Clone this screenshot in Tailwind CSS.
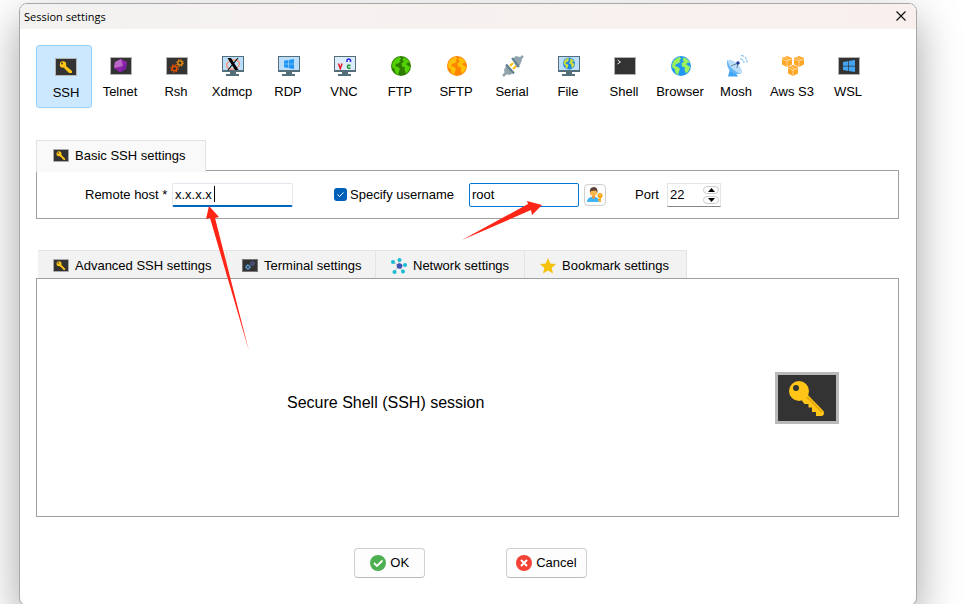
<!DOCTYPE html>
<html lang="en">
<head>
    <meta charset="UTF-8">
    <meta name="viewport" content="width=device-width, initial-scale=1.0">
    <title>Session settings</title>
    <script src="https://cdn.jsdelivr.net/npm/@tailwindcss/browser@4"></script>
</head>
<body class="min-h-screen overflow-hidden bg-white pt-[3px] pr-[50px] pl-[19px] font-['Liberation_Sans',Arial,sans-serif] text-[13px] leading-5 text-black">
    <!-- Shared icon shapes -->
    <svg class="hidden" aria-hidden="true">
        <symbol id="screen" viewBox="0 0 22 18">
            <rect x=".5" y=".5" width="21" height="17" fill="#333" stroke="#b4b4b4"/>
        </symbol>
        <symbol id="key" viewBox="0 0 64 52">
            <rect x="1.5" y="1.5" width="61" height="49" fill="#333" stroke="#b9b9b9" stroke-width="3"/>
            <path d="M32 22 48.500 39q1.500 4-1.500 5h-6v-4h-4v-4.500h-3.500V32h-4l-3-4z" fill="#ffc517"/>
            <path d="m32 25 15 15" stroke="#e5a90d" stroke-width="2" fill="none"/>
            <circle cx="24" cy="19" r="10" fill="#ffc517"/>
            <circle cx="21" cy="16" r="3" fill="#333"/>
        </symbol>
        <symbol id="gear" viewBox="0 0 10 10">
            <circle cx="5" cy="5" r="2.6" fill="none" stroke="currentColor" stroke-width="1.6"/>
            <circle cx="5" cy="5" r="4" fill="none" stroke="currentColor" stroke-width="1.5" stroke-dasharray="1.6 1.54"/>
        </symbol>
        <symbol id="monitor" viewBox="0 0 22 20">
            <path d="M0 0h22v16H0z" fill="#546e7a"/>
            <path d="M1 1h20v13H1z" fill="#bbdefb"/>
            <path d="M8 16h6v2h3v2H4v-2h4z" fill="#546e7a"/>
        </symbol>
        <symbol id="windows" viewBox="0 0 12 12">
            <path d="M0 2 5 1.200v4.500H0zM5.700 1.100 12 0v5.700H5.700zM0 6.400h5v4.500L0 10zM5.700 6.400H12V12l-6.300-1z" fill="currentColor"/>
        </symbol>
        <symbol id="land" viewBox="0 0 20 20">
            <path d="M1.500 7C3 3.500 5.500 1.500 8.500 1l2 1.500-2 1.500 1 1.500-2.500 2-2 .5L4 10l3 1 2 2-1 2.500L7 19C5 18 3.500 16 4 13.500L1 11zM12.500 1.500C15.500 2 18 4.500 19 7l-2-.5-2 1.500 2.500 2 1.500.5c0 3-2 5.500-4 7l-1.500-3.500.5-2.500-3-1-.5-3 2.500-2-1.500-1.500z" fill="currentColor"/>
        </symbol>
        <symbol id="cube" viewBox="0 0 12 12">
            <path d="m6 0 5 2v6.500L6 11 1 8.500V2z" fill="#ffa726"/>
            <path d="m1 3 5 2 5-2M6 5v6M3.500 1.500 8 3.500" fill="none" stroke="#ffe0b2" stroke-width=".8"/>
        </symbol>
    </svg>

    <main class="relative min-h-[603px] rounded-[8px] border border-[#a8a8a8] bg-white shadow-[0_16px_44px_rgba(0,0,0,0.36)]">
        <header class="flex h-[25px] items-center justify-between rounded-t-[7px] bg-linear-to-r from-[#f3f2f1] to-[#f9f0ee] pr-[10px] pl-1">
            <h1 class="font-['Open_Sans','Noto_Sans',sans-serif] text-[11px]">Session settings</h1>
            <button type="button" aria-label="Close" class="pb-[2px]">
                <svg class="size-[10px]" viewBox="0 0 10 10"><path d="m.5.5 9 9m0-9-9 9" fill="none" stroke="#111" stroke-width="1.2"/></svg>
            </button>
        </header>

        <div class="pr-[17px] pl-4">
            <nav class="mt-4 flex *:flex *:h-[63px] *:w-[56px] *:flex-col *:items-center *:gap-[6px] *:pt-[11px] *:whitespace-nowrap">
                <button type="button" class="rounded-[3px] border border-[#99d1ff] bg-[#cce8ff] pl-1">
                    <svg class="h-5 w-[22px] shrink-0" viewBox="0 0 22 20"><use href="#screen" y="1" width="22" height="18"/><path d="m10.500 8.500 6.500 5.500v2h-3L9 11z" fill="#ffc517"/><circle cx="8" cy="7.500" r="3.200" fill="#ffc517"/><circle cx="7" cy="6.500" r=".9" fill="#333"/></svg>
                    SSH
                </button>
                <button type="button">
                    <svg class="ml-0.5 h-5 w-[22px] shrink-0" viewBox="0 0 22 20"><use href="#screen" y="1" width="22" height="18"/><path d="m11 3 6 3-1 7-6 3.500L4 12l1-6z" fill="#8e24aa"/><path d="m11 3 2 7-9 2 1-6z" fill="#ba68c8"/><path d="m13 10 4-4-1 7-6 3.500z" fill="#7b1fa2"/></svg>
                    Telnet
                </button>
                <button type="button">
                    <svg class="ml-0.5 h-5 w-[22px] shrink-0" viewBox="0 0 22 20"><use href="#screen" y="1" width="22" height="18"/><use href="#gear" x="4" y="8" width="9" height="9" class="text-[#e65100]"/><use href="#gear" x="10" y="3" width="8" height="8" class="text-[#ef8e0c]"/></svg>
                    Rsh
                </button>
                <button type="button">
                    <svg class="ml-0.5 h-5 w-[22px] shrink-0" viewBox="0 0 22 20"><use href="#monitor" width="22" height="20"/><ellipse cx="11" cy="8.500" rx="6.500" ry="4.500" fill="none" stroke="#ff8a65" stroke-width="1.300" transform="rotate(-12 11 8.500)"/><path d="M5.500 2H9l7.500 12H13z" fill="#000"/><path d="M16 2 6 14" stroke="#000" stroke-width="1.100"/></svg>
                    Xdmcp
                </button>
                <button type="button">
                    <svg class="ml-0.5 h-5 w-[22px] shrink-0" viewBox="0 0 22 20"><use href="#monitor" width="22" height="20"/><use href="#windows" x="6" y="3" width="10" height="10" class="text-[#2196f3]"/></svg>
                    RDP
                </button>
                <button type="button">
                    <svg class="ml-0.5 h-5 w-[22px] shrink-0" viewBox="0 0 22 20"><use href="#monitor" width="22" height="20"/><path d="M1 1h20v13H1z" fill="#dcecfa"/><path d="m4.500 7.500 1.800 5 1.800-5" fill="none" stroke="#e81c24" stroke-width="1.500"/><path d="M13 6V4q1.800-2 3.500 0v2" fill="none" stroke="#2a2ae0" stroke-width="1.500"/><path d="M16.500 9.500q-3-1-3 1.200t3 1.300" fill="none" stroke="#16952a" stroke-width="1.500"/></svg>
                    VNC
                </button>
                <button type="button">
                    <svg class="ml-0.5 size-5 shrink-0" viewBox="0 0 20 20"><circle cx="10" cy="10" r="10" fill="#2e7d00"/><use href="#land" width="20" height="20" class="text-[#52cf05]"/></svg>
                    FTP
                </button>
                <button type="button">
                    <svg class="ml-0.5 size-5 shrink-0" viewBox="0 0 20 20"><circle cx="10" cy="10" r="10" fill="#ff8500"/><use href="#land" width="20" height="20" class="text-[#ffc107]"/></svg>
                    SFTP
                </button>
                <button type="button">
                    <svg class="ml-0.5 h-5 w-[22px] shrink-0 overflow-visible" viewBox="0 0 22 20"><path d="m18 3 3-3M1 20l4-4" stroke="#90a4ae" stroke-width="2.500"/><path d="m10 3 4-3 4 1 2 3-2 5-3 3z" fill="#90a4ae"/><path d="m10 2 7 9" stroke="#607d8b" stroke-width="2"/><path d="m5 8 7 8-4 3-5-1-1-4z" fill="#90a4ae"/><path d="m4 8.500 8 9" stroke="#607d8b" stroke-width="2"/><path d="m8 10 3-3m0 6 3-3" stroke="#ffc107" stroke-width="2"/></svg>
                    Serial
                </button>
                <button type="button">
                    <svg class="ml-0.5 h-5 w-[22px] shrink-0" viewBox="0 0 22 20"><use href="#monitor" width="22" height="20"/><circle cx="11" cy="7.500" r="6" fill="#1e88e5"/><use href="#land" x="5" y="1.500" width="12" height="12" class="text-[#cddc39]"/></svg>
                    File
                </button>
                <button type="button">
                    <svg class="ml-0.5 h-5 w-[22px] shrink-0" viewBox="0 0 22 20"><use href="#screen" y="1" width="22" height="18"/><path d="m3.500 4 3 2-3 2" fill="none" stroke="#eee"/></svg>
                    Shell
                </button>
                <button type="button">
                    <svg class="ml-0.5 size-5 shrink-0" viewBox="0 0 20 20"><circle cx="10" cy="10" r="10" fill="#2196f3"/><use href="#land" width="20" height="20" class="text-[#9cf25a]"/></svg>
                    Browser
                </button>
                <button type="button">
                    <svg class="ml-0.5 h-5 w-[22px] shrink-0 overflow-visible" viewBox="0 0 22 20"><path d="M4 13 2 20.500h10L9 16z" fill="#42a5f5"/><path d="M1.500 4C-1 12 7 21 16 17z" fill="#64b5f6"/><ellipse cx="9" cy="10.500" rx="9" ry="3.500" transform="rotate(43 9 10.500)" fill="#bbdefb"/><path d="m5 10 7-3-1 5" fill="none" stroke="#607d8b"/><circle cx="12" cy="7" r="1.700" fill="#1a3b9c"/><path d="M14 3q4 0 4 4M15-.5q6 .5 6 7" fill="none" stroke="#64b5f6" stroke-dasharray="3 1"/></svg>
                    Mosh
                </button>
                <button type="button">
                    <svg class="ml-0.5 h-5 w-[22px] shrink-0" viewBox="0 0 22 20"><use href="#cube" x="-1" width="12" height="12"/><use href="#cube" x="11" width="12" height="12"/><use href="#cube" x="5" y="9" width="12" height="12"/></svg>
                    Aws S3
                </button>
                <button type="button">
                    <svg class="ml-0.5 h-5 w-[22px] shrink-0" viewBox="0 0 22 20"><use href="#screen" y="1" width="22" height="18"/><use href="#windows" x="5" y="4" width="12" height="12" class="text-[#42a5f5]"/></svg>
                    WSL
                </button>
            </nav>

            <section class="mt-8">
                <h2 class="relative flex h-8 w-[170px] items-center gap-[6px] border border-b-0 border-[#e3e3e3] bg-[#f9f9f9] px-4 pb-[2px] whitespace-nowrap">
                    <svg class="h-[13px] w-4 shrink-0"><use href="#key"/></svg>
                    Basic SSH settings
                </h2>
                <form class="-mt-[2px] flex h-[49px] items-center border border-[#a0a0a0] pl-12 whitespace-nowrap">
                    <label for="host" class="w-[87px]">Remote host *</label>
                    <span class="relative">
                        <input id="host" type="text" value="x.x.x.x" class="block h-6 w-[121px] rounded-[2px] border border-b-2 border-[#e3e8ee] border-b-[#0067c0] px-[2px] outline-none">
                        <!-- Text caret -->
                        <span class="absolute top-[3px] left-[42px] h-4 w-px bg-black"></span>
                    </span>
                    <span class="relative ml-[41px] size-[13px]">
                        <input id="specify" type="checkbox" checked class="block size-[13px] appearance-none rounded-[3px] bg-[#005fb8]">
                        <svg class="pointer-events-none absolute inset-0 size-[13px]" viewBox="0 0 13 13"><path d="m3.500 6.500 2 2 4-4" fill="none" stroke="#fff"/></svg>
                    </span>
                    <label for="specify" class="ml-[3px] w-[119px]">Specify username</label>
                    <input type="text" aria-label="Username" value="root" class="h-6 w-[110px] rounded-[2px] border border-[#0078d4] px-[2px] outline-none">
                    <button type="button" aria-label="Stored credentials" class="ml-[5px] flex size-[22px] items-center justify-center rounded-[4px] border border-[#d0d0d0] bg-[#fdfdfd]">
                        <svg class="size-4" viewBox="0 0 16 16"><path d="M0 15q0-4 4-5h5q3 1 3 5z" fill="#42b4f5"/><path d="M5 8h3v3l-1.500 1L5 11z" fill="#ef9a3c"/><circle cx="6.500" cy="5.500" r="3.500" fill="#ffb74d"/><path d="M3 6q-1-6 4-6 4 0 3.500 6L9 3.500 4 4z" fill="#5d4037"/><circle cx="13" cy="8.500" r="2.500" fill="#ffa000"/><path d="M12.300 9h1.500v6h-1.500zM11 12h2v1.500h-2z" fill="#ffa000"/><circle cx="13" cy="8" r=".7" fill="#fff"/></svg>
                    </button>
                    <label for="port" class="ml-[29px] w-8">Port</label>
                    <div class="flex h-6 w-[54px] items-center border border-[#e5e5e5] border-b-[#868686]">
                        <input id="port" type="number" value="22" class="w-[35px] appearance-none pl-[2px] outline-none [appearance:textfield] [&::-webkit-inner-spin-button]:appearance-none">
                        <span class="flex flex-col gap-[2px]">
                            <button type="button" aria-label="Increase port" class="flex h-2 w-4 items-center justify-center rounded-full border border-[#ccc]"><svg class="h-1 w-[7px] shrink-0" viewBox="0 0 7 4"><path d="m3.500 0 3.500 4H0z"/></svg></button>
                            <button type="button" aria-label="Decrease port" class="flex h-2 w-4 items-center justify-center rounded-full border border-[#ccc]"><svg class="h-1 w-[7px] shrink-0" viewBox="0 0 7 4"><path d="M3.500 4 7 0H0z"/></svg></button>
                        </span>
                    </div>
                </form>
            </section>

            <section class="mt-[31px]">
                <div class="ml-[2px] flex *:flex *:h-7 *:items-center *:gap-[6px] *:border-t *:border-r *:border-[#e3e3e3] *:bg-[#f2f2f2] *:pt-[2px] *:pl-[15px] *:whitespace-nowrap">
                    <button type="button" class="w-[189px]"><svg class="h-[13px] w-4"><use href="#key"/></svg>Advanced SSH settings</button>
                    <button type="button" class="w-[149px]"><svg class="h-[13px] w-4" viewBox="0 0 16 13"><rect x=".5" y=".5" width="15" height="12" fill="#333" stroke="#777"/><use href="#gear" x="3" y="5" width="6" height="6" class="text-[#64b5f6]"/><use href="#gear" x="8" y="2" width="5" height="5" class="text-[#5c6bc0]"/></svg>Terminal settings</button>
                    <button type="button" class="w-[149px]"><svg class="size-4" viewBox="0 0 16 16"><path d="m8 8-6-4m6 4V2m0 6 6-1M8 8l-5 6m5-6 4 6" stroke="#b0bec5"/><g fill="#14bcd4"><circle cx="2" cy="4" r="2"/><circle cx="8.500" cy="2" r="2"/><circle cx="14" cy="7" r="2"/><circle cx="3.500" cy="14" r="2"/><circle cx="12" cy="13.500" r="2"/></g><circle cx="8.500" cy="8" r="2.800" fill="#3f51b5"/></svg>Network settings</button>
                    <button type="button" class="w-[162px]"><svg class="size-4" viewBox="0 0 16 16"><path d="m8 0 2.300 5.500 5.700.5-4.300 4L13 15.500l-5-3-5 3L4.300 10 0 6l5.700-.5z" fill="#f4c20d"/></svg>Bookmark settings</button>
                </div>
                <div class="flex h-[239px] items-center justify-between border border-[#a0a0a0] pr-[59px] pl-[250px]">
                    <p class="pt-[10px] text-base">Secure Shell (SSH) session</p>
                    <svg class="h-[52px] w-16"><use href="#key"/></svg>
                </div>
            </section>

            <footer class="mt-[31px] flex justify-center gap-[81px] pr-[6px] pl-3 *:flex *:h-[30px] *:items-center *:gap-1 *:rounded-[4px] *:border *:border-[#d0d0d0] *:border-b-[#bcbcbc] *:bg-[#fdfdfd]">
                <button type="button" class="px-[15px]">
                    <svg class="size-4" viewBox="0 0 16 16"><circle cx="8" cy="8" r="8" fill="#4caf50"/><path d="m4 8 3 3 5.500-5.500" fill="none" stroke="#fff" stroke-width="1.800"/></svg>
                    OK
                </button>
                <button type="button" class="px-[9px]">
                    <svg class="size-4" viewBox="0 0 16 16"><circle cx="8" cy="8" r="8" fill="#f44336"/><path d="m5 5 6 6m0-6-6 6" stroke="#fff" stroke-width="2"/></svg>
                    Cancel
                </button>
            </footer>
        </div>
    </main>

    <!-- Annotation arrows -->
    <svg class="pointer-events-none absolute top-[200px] left-[200px] h-[160px] w-[350px]" viewBox="0 0 350 160" fill="#ff2516">
        <path d="m9 6 10 11-4 1 34 133L10 18l-4 1z"/>
        <path d="m342 5-10 10-1-5-69 30 66-36-1-3z"/>
    </svg>
</body>
</html>
